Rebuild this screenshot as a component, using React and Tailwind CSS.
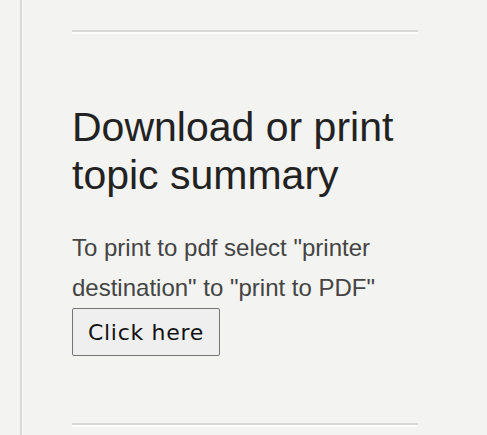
export default function App() {
  return (
    <div className="flex h-[435px] w-full overflow-hidden bg-[#f3f3f1]" style={{ fontFamily: '"Liberation Sans", Arial, sans-serif' }}>
      <div className="w-[20px] shrink-0" />
      <div className="w-[2px] shrink-0 bg-[#d9d9d7]" />
      <div className="w-[1px] shrink-0 bg-[#fbfbfa]" />
      <div className="w-[346px] shrink-0 ml-[49px] pt-[30px]">
        <div className="h-[2px] bg-[#d8d8d6]" />
        <div className="h-[2px] bg-[#fdfdfd]" />
        <h2 className="mt-[69px] text-[41px] leading-[48px] text-[#222222] font-normal">
          Download or print topic summary
        </h2>
        <p className="mt-[29px] text-[24px] leading-[40px] text-[#444444]">
          To print to pdf select "printer destination" to "print to PDF"
        </p>
        <button
          className="block h-[48px] px-[15px] border border-[#767676] rounded-[2px] bg-[#efefef] text-[22px] text-[#111111] tracking-[0.7px]"
          style={{ fontFamily: '"DejaVu Sans", sans-serif' }}
        >
          Click here
        </button>
        <div className="mt-[67px] h-[2px] bg-[#d8d8d6]" />
        <div className="h-[2px] bg-[#fdfdfd]" />
      </div>
    </div>
  );
}
